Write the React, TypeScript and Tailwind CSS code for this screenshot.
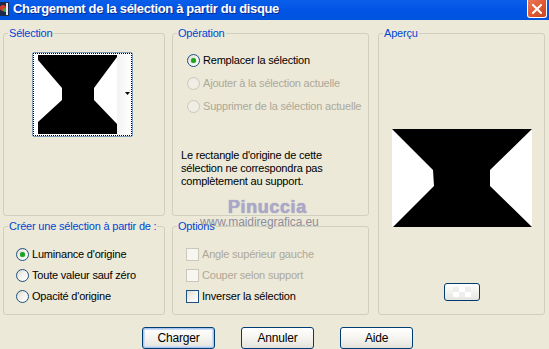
import React from "react";

const Radio = ({ checked, disabled }: { checked?: boolean; disabled?: boolean }) => (
  <span
    className={
      "flex h-[13px] w-[13px] shrink-0 items-center justify-center rounded-full border " +
      (disabled
        ? "border-[#CAC8BB] bg-[#F0EEE4]"
        : "border-[#1C5180] bg-gradient-to-br from-[#DCDAD0] via-[#F4F3EE] to-[#FFFFFF]")
    }
  >
    {checked && <span className="h-[5px] w-[5px] rounded-full bg-[#21A121] shadow-[0_0_1px_#5CD35C]" />}
  </span>
);

const Check = ({ disabled }: { disabled?: boolean }) => (
  <span
    className={
      "block h-[13px] w-[13px] shrink-0 border " +
      (disabled
        ? "border-[#CAC8BB] bg-[#F7F6F1]"
        : "border-[#1C5180] bg-gradient-to-br from-[#DCDAD0] via-[#F4F3EE] to-[#FFFFFF]")
    }
  />
);

const Legend = ({ children }: { children: React.ReactNode }) => (
  <legend className="ml-[4px] whitespace-nowrap px-[1px] leading-[12px] text-[#0046D5]">{children}</legend>
);

const Btn = ({ children, def }: { children: React.ReactNode; def?: boolean }) => (
  <button
    className={
      "flex h-[22px] w-[73px] items-center justify-center rounded-[3px] border border-[#003C74] bg-gradient-to-b from-[#FFFFFF] via-[#F5F4EF] to-[#E3E2DA] text-[12px] tracking-[-0.2px] text-black " +
      (def ? "shadow-[inset_0_0_0_1px_#A8C6EE,inset_0_0_0_2px_#CEDDF5]" : "")
    }
  >
    {children}
  </button>
);

export default function App() {
  return (
    <div className="relative h-[349px] w-[549px] overflow-hidden whitespace-nowrap bg-[#ECE9D8] font-['Liberation_Sans',Arial,sans-serif] text-[11px] tracking-[-0.2px] text-black">
      {/* Title bar */}
      <div className="flex h-[20px] items-start bg-gradient-to-b from-[#0A5EEA] via-[#0055E5] to-[#0053DD]">
        <svg width="9" height="14" viewBox="0 0 9 14" className="mt-[2px]">
          <rect x="0" y="0" width="9" height="14" fill="#1A2A4A" />
          <circle cx="3" cy="6" r="3" fill="#D93A2A" />
          <circle cx="5" cy="8" r="2" fill="#3AA84A" />
          <rect x="6" y="1" width="2" height="12" fill="#E8E8F0" />
        </svg>
        <div className="ml-[4px] mt-[1px] text-[13px] font-bold leading-[15px] tracking-[-0.35px] text-white [text-shadow:1px_1px_0_#0A2A8A]">
          Chargement de la sélection à partir du disque
        </div>
        <div className="flex-1" />
        <div className="mr-[2px] flex h-[18px] w-[20px] items-center justify-center rounded-b-[3px] border border-t-0 border-white bg-gradient-to-br from-[#E8795B] via-[#E15A34] to-[#C8431E]">
          <svg width="10" height="10" viewBox="0 0 10 10">
            <path d="M1 1 L9 9 M9 1 L1 9" stroke="white" strokeWidth="2" strokeLinecap="square" />
          </svg>
        </div>
      </div>

      {/* Body */}
      <div className="grid grid-cols-[162px_204px_176px] grid-rows-[189px_95px] gap-y-[4px] pl-[3px] pt-[7px]">
        {/* Sélection */}
        <fieldset className="col-start-1 row-start-1 rounded-[3px] border border-[#D0D0BF] p-0">
          <Legend>Sélection</Legend>
          <div className="ml-[28px] mt-[13px] h-[85px] w-[101px] rounded-[2px] border border-[#7F9DB9] bg-white">
            <div className="flex h-full w-full border border-dotted border-black">
              <div className="pl-[4px] pt-[1px]">
                <svg width="79" height="79" viewBox="0 0 79 79" className="block">
                  <rect width="79" height="79" fill="white" />
                  <polygon
                    points="0,0 79,0 79,2 56,33 56,45 79,69 79,79 0,79 0,67 24,45 24,33 0,5"
                    fill="black"
                  />
                </svg>
              </div>
              <div className="flex flex-1 items-center justify-end bg-gradient-to-r from-[#F2F2F2] to-white pr-[1px]">
                <svg width="5" height="3" viewBox="0 0 5 3" className="mb-[3px]">
                  <polygon points="0,0 5,0 2.5,3" fill="black" />
                </svg>
              </div>
            </div>
          </div>
        </fieldset>

        {/* Opération */}
        <fieldset className="col-start-2 row-start-1 ml-[7px] rounded-[3px] border border-[#D0D0BF] p-0">
          <Legend>Opération</Legend>
          <div className="mt-[10px] flex flex-col pl-[14px]">
            <div className="flex h-[23px] items-center gap-[3px]">
              <Radio checked />
              <span>Remplacer la sélection</span>
            </div>
            <div className="flex h-[23px] items-center gap-[3px] text-[#ACA899]">
              <Radio disabled />
              <span>Ajouter à la sélection actuelle</span>
            </div>
            <div className="flex h-[23px] items-center gap-[3px] text-[#ACA899]">
              <Radio disabled />
              <span>Supprimer de la sélection actuelle</span>
            </div>
          </div>
          <p className="mt-[31px] pl-[8px] leading-[13px]">
            Le rectangle d'origine de cette
            <br />
            sélection ne correspondra pas
            <br />
            complètement au support.
          </p>
        </fieldset>

        {/* Aperçu */}
        <fieldset className="col-start-3 row-span-2 row-start-1 ml-[9px] rounded-[3px] border border-[#D0D0BF] p-0">
          <Legend>Aperçu</Legend>
          <div className="flex w-full flex-col items-center pl-[1px]">
            <svg width="140" height="98" viewBox="0 0 140 98" className="mt-[90px] block">
              <rect width="140" height="98" fill="white" />
              <polygon points="0,0 140,0 98,41 98,57 140,98 1,98 42,57 41,41" fill="black" />
            </svg>
            <div className="mt-[56px] flex h-[18px] w-[36px] items-center justify-center rounded-[3px] border border-[#003C74] bg-gradient-to-b from-white to-[#E6E5DE]">
              <svg width="18" height="10" viewBox="0 0 18 10">
                <rect x="0" y="0" width="6" height="5" fill="#EEEEEE" />
                <rect x="6" y="5" width="6" height="5" fill="#EEEEEE" />
                <rect x="12" y="0" width="6" height="5" fill="#EEEEEE" />
                <rect x="0" y="5" width="6" height="5" fill="#FFFFFF" />
                <rect x="6" y="0" width="6" height="5" fill="#FFFFFF" />
                <rect x="12" y="5" width="6" height="5" fill="#FFFFFF" />
              </svg>
            </div>
          </div>
        </fieldset>

        {/* Créer */}
        <fieldset className="col-start-1 row-start-2 rounded-[3px] border border-[#D0D0BF] p-0">
          <Legend>Créer une sélection à partir de :</Legend>
          <div className="mt-[12px] flex flex-col pl-[12px]">
            <div className="flex h-[21px] items-center gap-[3px]">
              <Radio checked />
              <span>Luminance d'origine</span>
            </div>
            <div className="flex h-[21px] items-center gap-[3px]">
              <Radio />
              <span>Toute valeur sauf zéro</span>
            </div>
            <div className="flex h-[21px] items-center gap-[3px]">
              <Radio />
              <span>Opacité d'origine</span>
            </div>
          </div>
        </fieldset>

        {/* Options */}
        <fieldset className="col-start-2 row-start-2 ml-[7px] rounded-[3px] border border-[#D0D0BF] p-0">
          <Legend>Options</Legend>
          <div className="mt-[12px] flex flex-col pl-[13px]">
            <div className="flex h-[21px] items-center gap-[3px] text-[#ACA899]">
              <Check disabled />
              <span>Angle supérieur gauche</span>
            </div>
            <div className="flex h-[21px] items-center gap-[3px] text-[#ACA899]">
              <Check disabled />
              <span>Couper selon support</span>
            </div>
            <div className="flex h-[21px] items-center gap-[3px]">
              <Check />
              <span>Inverser la sélection</span>
            </div>
          </div>
        </fieldset>
      </div>

      {/* Buttons */}
      <div className="mt-[12px] flex gap-[26px] pl-[142px]">
        <Btn def>Charger</Btn>
        <Btn>Annuler</Btn>
        <Btn>Aide</Btn>
      </div>

      {/* Watermark */}
      <div className="pointer-events-none absolute left-[228px] top-[197px] text-[18px] font-semibold leading-[20px] tracking-[0.6px] text-[#ABA8CA] [text-shadow:0_0_1px_#8A86B0]">
        Pinuccia
      </div>
      <div className="pointer-events-none absolute left-[200px] top-[215px] text-[12px] leading-[14px] tracking-[-0.1px] text-[#8E8E9E]">
        www.maidiregrafica.eu
      </div>
    </div>
  );
}
